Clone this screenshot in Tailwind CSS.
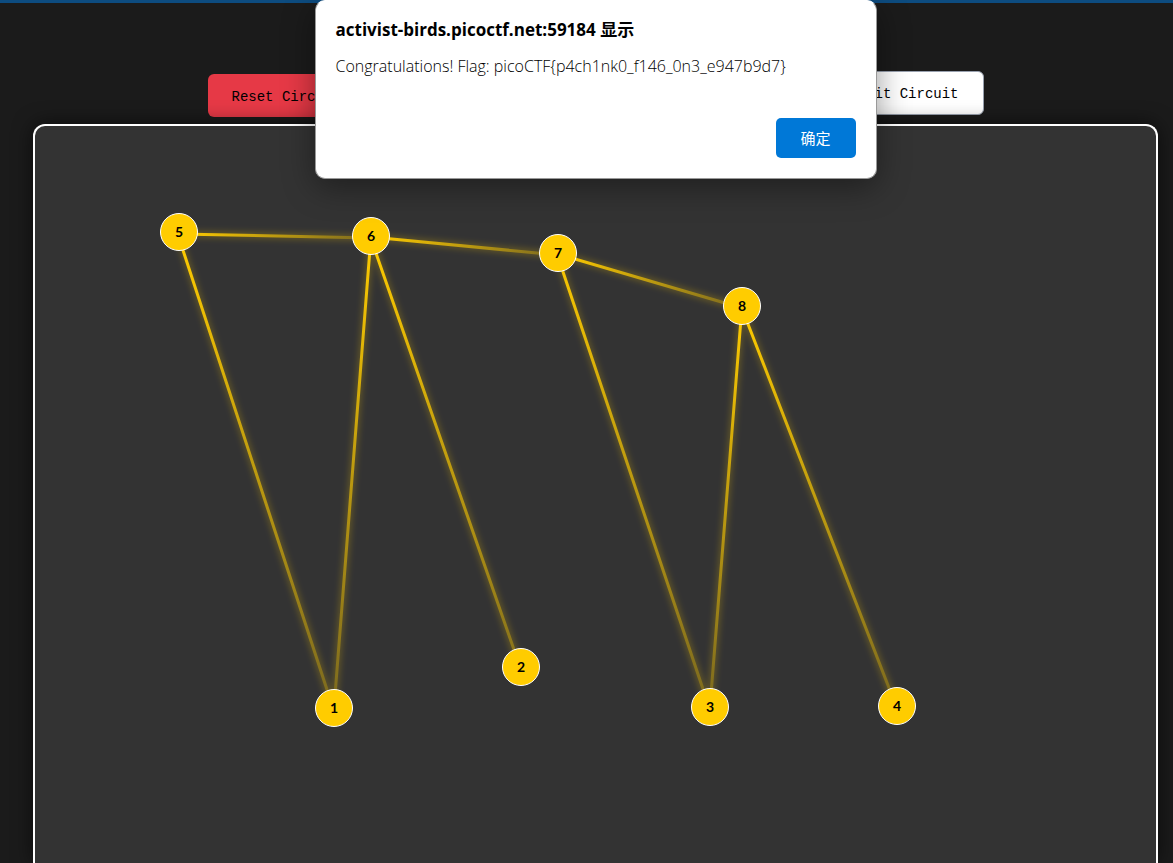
<!DOCTYPE html>
<html lang="zh-CN">
<head>
<meta charset="utf-8">
<meta name="viewport" content="width=device-width, initial-scale=1">
<title>Circuit</title>
<script src="https://cdn.jsdelivr.net/npm/@tailwindcss/browser@4"></script>
</head>
<body class="bg-[#1b1b1b]">
<div class="relative flex h-screen flex-col overflow-hidden">
  <div class="h-[3px] shrink-0 bg-[#0d4c80]"></div>
  <div class="flex flex-1 flex-col pt-[71px] pr-[15px] pl-[33px]">
    <div class="mx-auto flex w-full max-w-[776px] justify-between font-['Liberation_Mono','Noto_Sans_CJK_SC',monospace] text-sm text-black">
      <button type="button" class="h-[43px] rounded-md bg-[#e63946] px-6 pt-[2px]">Reset Circuit</button>
      <button type="button" class="-mt-[3px] mb-[3px] h-[44px] rounded-md border border-gray-400 bg-white px-6 pt-[2px]">Submit Circuit</button>
    </div>

    <main class="relative mt-[6px] flex-1 rounded-t-xl border-2 border-b-0 border-white bg-[#333] shadow-[0_0_20px_rgba(0,0,0,0.6)]">
      <svg class="absolute top-0 left-0" width="1120" height="740" viewBox="35 126 1120 740" fill="none" aria-hidden="true">
        <defs>
          <filter id="glow" filterUnits="userSpaceOnUse" x="35" y="126" width="1120" height="740"><feGaussianBlur stdDeviation="3.5"/></filter>
          <linearGradient id="g56" gradientUnits="userSpaceOnUse" x1="179" y1="233" x2="371" y2="237"><stop stop-color="#fc0"/><stop offset="1" stop-color="#7b691f"/></linearGradient>
          <linearGradient id="g67" gradientUnits="userSpaceOnUse" x1="371" y1="237" x2="558" y2="254"><stop stop-color="#fc0"/><stop offset="1" stop-color="#7b691f"/></linearGradient>
          <linearGradient id="g78" gradientUnits="userSpaceOnUse" x1="558" y1="254" x2="742" y2="307"><stop stop-color="#fc0"/><stop offset="1" stop-color="#7b691f"/></linearGradient>
          <linearGradient id="down" gradientUnits="userSpaceOnUse" x1="0" y1="236" x2="0" y2="708"><stop stop-color="#fc0"/><stop offset="1" stop-color="#7b691f"/></linearGradient>
          <linearGradient id="down8" gradientUnits="userSpaceOnUse" x1="0" y1="306" x2="0" y2="708"><stop stop-color="#fc0"/><stop offset="1" stop-color="#7b691f"/></linearGradient>
        </defs>
        <path filter="url(#glow)" stroke="#fc0" stroke-opacity=".5" stroke-width="3" d="M179 234 371 238M371 237 558 255M558 254 742 308M178 235 333 708M371 236 334 708M370 236 520 667M557 254 709 707M742 306 710 707M741 306 896 706"/>
        <g stroke-width="3">
          <path stroke="url(#g56)" d="M179 234 371 238"/>
          <path stroke="url(#g67)" d="M371 237 558 255"/>
          <path stroke="url(#g78)" d="M558 254 742 308"/>
          <path stroke="url(#down)" d="M178 235 333 708M371 236 334 708M370 236 520 667M557 254 709 707"/>
          <path stroke="url(#down8)" d="M742 306 710 707M741 306 896 706"/>
        </g>
      </svg>
      <div class="font-['Lato',sans-serif] text-sm font-bold text-black">
        <div class="absolute top-[87px] left-[125px] flex size-[38px] items-center justify-center rounded-full border border-white bg-[#fc0]">5</div>
        <div class="absolute top-[91px] left-[317px] flex size-[38px] items-center justify-center rounded-full border border-white bg-[#fc0]">6</div>
        <div class="absolute top-[108px] left-[504px] flex size-[38px] items-center justify-center rounded-full border border-white bg-[#fc0]">7</div>
        <div class="absolute top-[161px] left-[688px] flex size-[38px] items-center justify-center rounded-full border border-white bg-[#fc0]">8</div>
        <div class="absolute top-[563px] left-[280px] flex size-[38px] items-center justify-center rounded-full border border-white bg-[#fc0]">1</div>
        <div class="absolute top-[522px] left-[467px] flex size-[38px] items-center justify-center rounded-full border border-white bg-[#fc0]">2</div>
        <div class="absolute top-[562px] left-[656px] flex size-[38px] items-center justify-center rounded-full border border-white bg-[#fc0]">3</div>
        <div class="absolute top-[561px] left-[843px] flex size-[38px] items-center justify-center rounded-full border border-white bg-[#fc0]">4</div>
      </div>
    </main>
  </div>

  <div class="absolute top-0 right-[15px] left-[33px] flex justify-center">
    <div role="alertdialog" aria-labelledby="t" aria-describedby="m" class="flex w-[562px] flex-col rounded-[10px] border border-[#999] border-t-white bg-white px-5 pt-[17px] pb-5 font-['Open_Sans','Noto_Sans_CJK_SC',sans-serif] text-black shadow-[0_8px_32px_rgba(0,0,0,0.4)]">
      <h1 id="t" class="text-[17px] leading-6 font-bold whitespace-nowrap">activist-birds.picoctf.net:59184 显示</h1>
      <p id="m" class="mt-3 text-base leading-6 font-light whitespace-nowrap">Congratulations! Flag: picoCTF{p4ch1nk0_f146_0n3_e947b9d7}</p>
      <button type="button" class="mt-10 h-10 w-20 self-end rounded-[5px] bg-[#0078d7] text-[15px] text-white">确定</button>
    </div>
  </div>
</div>
</body>
</html>
